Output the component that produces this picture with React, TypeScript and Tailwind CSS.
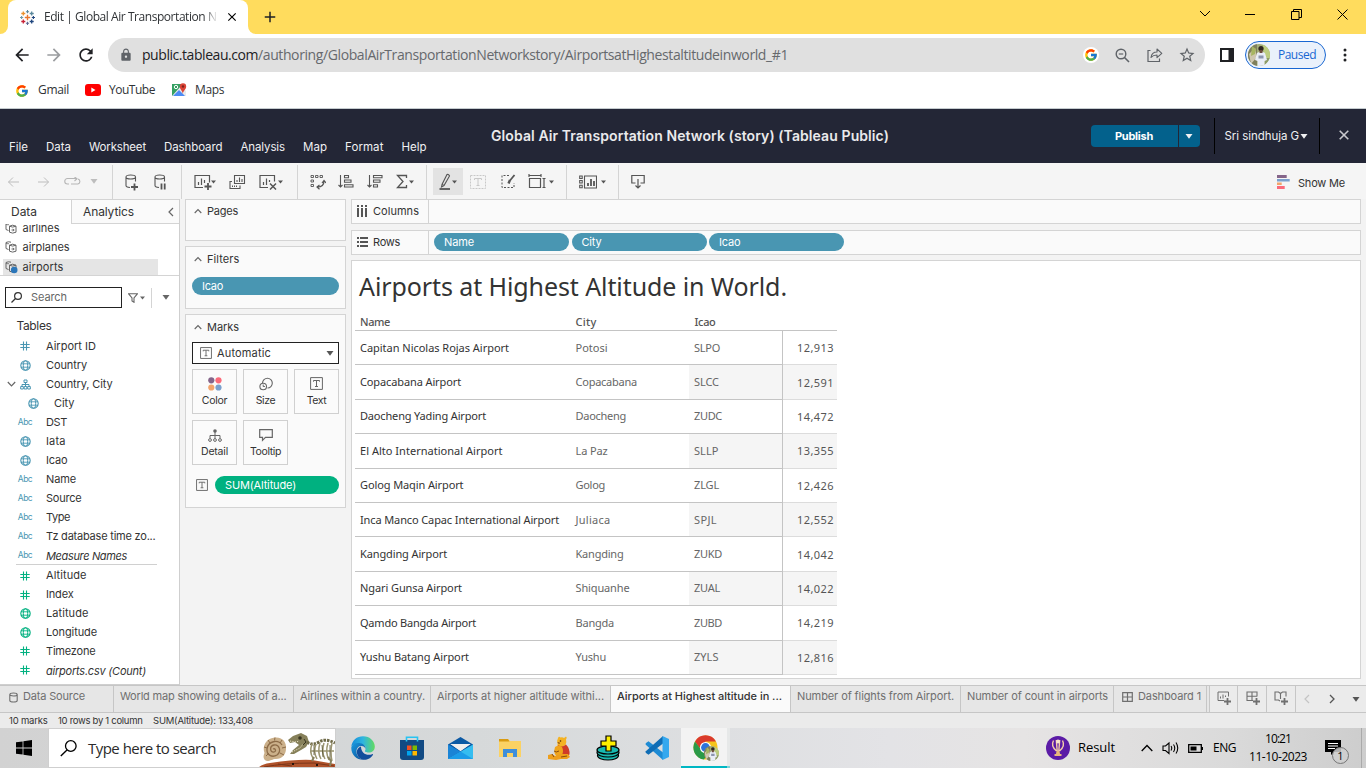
import React, { useLayoutEffect, useRef, useState } from "react";
import { MdArrowBack, MdArrowForward, MdRefresh, MdLock, MdStarBorder, MdAdd, MdClose } from "react-icons/md";
import { FcGoogle } from "react-icons/fc";

const UI = "font-['Inter','Liberation_Sans',sans-serif]";
const SYS = "font-['Open_Sans','Noto_Sans',sans-serif]";
const VIZ = "font-['Noto_Sans','Open_Sans',sans-serif]";

/* Text tracked so that it fills the given width. */
function Label({ w, c = "", children }: { w: number; c?: string; children: string }) {
  const ref = useRef<HTMLSpanElement>(null);
  const [ls, setLs] = useState(0);
  useLayoutEffect(() => {
    const el = ref.current;
    if (!el) return;
    setLs((w - el.getBoundingClientRect().width) / children.length);
  }, [w, children]);
  return (
    <span ref={ref} className={`inline-block shrink-0 justify-self-start whitespace-pre leading-4 ${c}`} style={{ letterSpacing: `${ls}px` }}>
      {children}
    </span>
  );
}

function Svg({ w, h, c = "", children }: { w: number; h: number; c?: string; children: React.ReactNode }) {
  return (
    <svg width={w} height={h} viewBox={`0 0 ${w} ${h}`} fill="none" stroke="currentColor" className={`shrink-0 ${c}`}>
      {children}
    </svg>
  );
}

const Caret = ({ c = "" }: { c?: string }) => (
  <Svg w={5} h={4} c={c}><path d="M0 .5h5L2.5 3.5z" fill="currentColor" stroke="none" /></Svg>
);
const BigCaret = ({ c = "" }: { c?: string }) => (
  <Svg w={8} h={5} c={c}><path d="M.5 0h7L4 4.8z" fill="currentColor" stroke="none" /></Svg>
);

function TableauMark() {
  const plus = (x: number, y: number, r: number, col: string, s: number) => (
    <path key={`${x}-${y}`} d={`M${x - r} ${y}h${2 * r}M${x} ${y - r}v${2 * r}`} stroke={col} strokeWidth={s} />
  );
  return (
    <Svg w={15} h={15}>
      {plus(7.5, 7.5, 2.7, "#e8762d", 1.4)}
      {plus(7.5, 1.7, 1.6, "#5b879b", 1.1)}
      {plus(7.5, 13.3, 1.6, "#5c6692", 1.1)}
      {plus(1.6, 7.5, 1.6, "#7099a6", 1.1)}
      {plus(13.4, 7.5, 1.6, "#1f457e", 1.1)}
      {plus(3.3, 3.5, 2, "#eb912c", 1.3)}
      {plus(11.7, 3.5, 2, "#59879b", 1.3)}
      {plus(3.3, 11.5, 2, "#c72035", 1.3)}
      {plus(11.7, 11.5, 2, "#1f457e", 1.3)}
    </Svg>
  );
}

function TabStrip() {
  return (
    <div className="flex h-[34px] bg-[#ffdc5d]">
      <div className="h-full w-2 bg-white"><div className="h-full w-full rounded-br-lg bg-[#ffdc5d]" /></div>
      <div className="flex h-full w-[240px] items-center rounded-t-lg bg-white pl-3">
        <TableauMark />
        <div className="ml-[9px] w-[173px] overflow-hidden text-[12px] text-[#303336] [mask-image:linear-gradient(to_right,black_160px,transparent_174px)]">
          <Label w={172.5}>Edit | Global Air Transportation N</Label>
        </div>
        <MdClose className="ml-[8px] size-[14px] shrink-0 text-black" />
      </div>
      <div className="h-full w-2 bg-white"><div className="h-full w-full rounded-bl-lg bg-[#ffdc5d]" /></div>
      <MdAdd className="ml-[5px] mt-[8px] size-[18px] text-[#202124]" />
      <div className="ml-auto flex h-[28px] items-center pr-[18px] text-black">
        <Svg w={12} h={8} c="mr-[34px]"><path d="M1 1l5 5 5-5" strokeWidth="1" /></Svg>
        <Svg w={10} h={10} c="mr-[36px]"><path d="M0 5.5h10" /></Svg>
        <Svg w={11} h={11} c="mr-[35px]"><path d="M.5 2.500h7.500v8H.5zM2.500 2.500v-2h8v8H8" /></Svg>
        <Svg w={11} h={11}><path d="M.5.5l10 10M10.5.5l-10 10" /></Svg>
      </div>
    </div>
  );
}

function Avatar({ size }: { size: number }) {
  return (
    <svg width={size} height={size} viewBox="0 0 22 22" className="shrink-0">
      <clipPath id={`av${size}`}><circle cx="11" cy="11" r="11" /></clipPath>
      <g clipPath={`url(#av${size})`}>
        <rect width="22" height="22" fill="#a3ad78" />
        <path d="M0 0h9v22H0z" fill="#7f7f5c" /><path d="M1 10l6-6 2 9-6 7z" fill="#cfc7b0" /><path d="M4 2l4 3-1 5-4 2z" fill="#a7b562" />
        <path d="M15 1h7v13h-6z" fill="#bccd80" /><path d="M17 14h5v8h-5z" fill="#8c9b66" />
        <path d="M9 9q4-3 8 0l2 7-2.500 1v5H9.500v-5L7 16z" fill="#e9edf7" />
        <circle cx="13" cy="4.500" r="2.600" fill="#2f2622" /><path d="M11.500 6h3v3h-3z" fill="#6d4c3c" /><path d="M10.500 11.500h5v3h-5z" fill="#8c96ae" />
      </g>
    </svg>
  );
}

function AddressRow() {
  return (
    <div className="flex h-[42px] items-center bg-white">
      <MdArrowBack className="ml-[12px] size-5 shrink-0 text-[#202124]" />
      <MdArrowForward className="ml-[12px] size-5 shrink-0 text-[#9b9da0]" />
      <MdRefresh className="ml-[12px] size-5 shrink-0 text-[#202124]" />
      <div className="ml-[12px] flex h-[34px] w-[1097px] items-center rounded-full bg-[#e0e0e0] pl-[11px] text-[14px]">
        <MdLock className="size-[14px] shrink-0 text-[#5f6368]" />
        <span className="ml-[9px] flex">
          <Label w={116} c="text-[#202124]">public.tableau.com</Label>
          <Label w={530} c="text-[#66696d]">/authoring/GlobalAirTransportationNetworkstory/AirportsatHighestaltitudeinworld_#1</Label>
        </span>
        <span className="ml-[295px] flex size-4 shrink-0 items-center justify-center rounded-full bg-white"><FcGoogle className="size-[14px]" /></span>
        <Svg w={15} h={15} c="ml-[16px] text-[#5f6368]">
          <circle cx="6" cy="6" r="4.8" strokeWidth="1.4" /><path d="M9.5 9.5l4.500 4.500" strokeWidth="1.6" /><path d="M3.8 6h4.400" strokeWidth="1.2" />
        </Svg>
        <Svg w={16} h={16} c="ml-[17px] text-[#5f6368]">
          <path d="M3.500 3.500H1v11h11.500v-3" strokeWidth="1.2" /><path d="M4 10.500c.5-3.500 3-5.500 6-5.500V2l4.800 4.300-4.800 4.400V8c-2.600 0-4.600.8-6 2.500z" strokeWidth="1.1" strokeLinejoin="round" />
        </Svg>
        <MdStarBorder className="ml-[15px] size-[18px] shrink-0 text-[#5f6368]" />
      </div>
      <Svg w={14} h={14} c="ml-[15px] text-[#202124]"><path d="M1 1h12v12H1z" strokeWidth="2" /><path d="M9 1h4v12H9z" fill="currentColor" /></Svg>
      <div className="ml-[11px] flex h-[28px] w-[81px] items-center rounded-full border border-[#1967d2] bg-[#eaf1fb] pl-[2px] text-[12px] text-[#1967d2]">
        <Avatar size={22} />
        <span className="ml-[8px]"><Label w={38}>Paused</Label></span>
      </div>
      <Svg w={4} h={14} c="ml-[17px] text-[#202124]"><g fill="currentColor" stroke="none"><circle cx="2" cy="2" r="1.500" /><circle cx="2" cy="7" r="1.500" /><circle cx="2" cy="12" r="1.500" /></g></Svg>
    </div>
  );
}

function Bookmarks() {
  return (
    <div className="flex h-[33px] items-center border-b border-[#c5cccf] bg-white pb-[4px] text-[12px] text-[#303336]">
      <FcGoogle className="ml-[15px] mt-px size-[14px] shrink-0" />
      <span className="ml-[9px]"><Label w={31}>Gmail</Label></span>
      <Svg w={16} h={12} c="ml-[16px]"><rect width="16" height="12" rx="3" fill="#f00" stroke="none" /><path d="M6.300 3.500v5l4.200-2.500z" fill="#fff" stroke="none" /></Svg>
      <span className="ml-[8px]"><Label w={46}>YouTube</Label></span>
      <svg width="15" height="14" viewBox="0 0 15 14" className="ml-[17px] shrink-0">
        <path d="M0 1h11v12H0z" fill="#35a163" /><path d="M0 13L9 3l5 5v5z" fill="#e8eaed" /><path d="M1 13l6-6 6 6z" fill="#4c8bf5" />
        <circle cx="4" cy="4" r="1.700" fill="none" stroke="#fff" /><path d="M10.800 11C10.500 7.500 7.800 6.500 7.800 3.500a3.200 3.200 0 016.400 0c0 3-3 4-3.400 7.500z" fill="#db4437" /><circle cx="11" cy="3.500" r="1.200" fill="#7b231c" />
      </svg>
      <span className="ml-[8px]"><Label w={29}>Maps</Label></span>
    </div>
  );
}

const MENU: [string, number][] = [["File", 19], ["Data", 25], ["Worksheet", 57], ["Dashboard", 58.5], ["Analysis", 44.5], ["Map", 24], ["Format", 38.5], ["Help", 25]];

function AppHeader() {
  return (
    <div className="grid h-[54px] grid-cols-[490px_1fr_auto] bg-[#232636] text-[11.500px] text-[#f0f0f2]">
      <div className="flex gap-[18px] pl-[9px] pt-[30px]">
        {MENU.map(([m, w]) => <Label key={m} w={w}>{m}</Label>)}
      </div>
      <div className="pl-px pt-[16px] text-[14px] font-semibold text-[#eaeaec]">
        <Label w={398}>Global Air Transportation Network (story) (Tableau Public)</Label>
      </div>
      <div className="flex h-[54px] items-center">
        <div className="flex h-[22px] w-[87px] items-center justify-center rounded-l-sm bg-[#03618c] text-[11px] font-bold text-white"><Label w={38}>Publish</Label></div>
        <div className="ml-px flex h-[22px] w-[21px] items-center justify-center rounded-r-sm bg-[#03618c]"><BigCaret /></div>
        <div className="ml-[14px] h-[36px] w-px bg-black" />
        <div className="ml-[10px] flex items-center"><Label w={74.5}>Sri sindhuja G</Label><BigCaret c="ml-[1px]" /></div>
        <div className="ml-[11px] h-[36px] w-px bg-black" />
        <Svg w={10} h={10} c="ml-[19px] mr-[17px] mb-[2px] text-[#c9c9ce]"><path d="M.7.7l8.600 8.600M9.300.7L.7 9.300" strokeWidth="1.600" /></Svg>
      </div>
    </div>
  );
}

const Sep = ({ c }: { c: string }) => <div className={`h-[34px] w-px shrink-0 bg-[#d4d4d4] ${c}`} />;
const ArrowL = <path d="M12 6H1.500M6 1.500L1.500 6 6 10.500" strokeWidth="1" />;

function Cylinder({ children }: { children: React.ReactNode }) {
  return (
    <Svg w={13} h={17} c="text-[#555]">
      <path d="M5 13.500C2.500 13.300 1 12.500 1 11.500v-8.500c0-1.200 2-2 4.700-2s4.800.8 4.800 2v4.500M1 3c0 1.200 2 2 4.700 2s4.800-.8 4.800-2" strokeWidth="1.100" />
      {children}
    </Svg>
  );
}

function ToolRow() {
  return (
    <div className="flex h-[36px] items-start bg-[#f5f5f5] pt-px text-[#555]">
      <div className="flex h-[35px] w-full items-center">
        <Svg w={13} h={12} c="ml-[7px] text-[#bdbdbd]">{ArrowL}</Svg>
        <Svg w={13} h={12} c="ml-[17px] rotate-180 text-[#bdbdbd]">{ArrowL}</Svg>
        <Svg w={18} h={10} c="ml-[14px] text-[#b5b5b5]"><path d="M5 7H3.500a2.500 2.500 0 010-5.500h9M10.500 0L13 1.700 10.500 4M14 2a2.600 2.600 0 010 5H7" strokeWidth="1.100" /></Svg>
        <BigCaret c="ml-[8px] text-[#bdbdbd]" />
        <Sep c="ml-[14px]" />
        <div className="ml-[12px] mt-px"><Cylinder><path d="M9.500 9.500v7M6 13h7" strokeWidth="1.800" /></Cylinder></div>
        <div className="ml-[16px] mt-px"><Cylinder><path d="M7.500 9.500v6M10.700 9.500v6" strokeWidth="1.800" /></Cylinder></div>
        <Sep c="ml-[14px]" />
        <Svg w={18} h={16} c="ml-[12px] mt-px"><path d="M9 13.500H1v-12h14.500v7M4.500 11V8M7.500 11V4.500M10.500 9V6" strokeWidth="1.200" /><path d="M14 9v7M10.500 12.500h7" strokeWidth="1.800" /></Svg>
        <Caret c="-ml-px" />
        <Svg w={17} h={16} c="ml-[13px]"><path d="M5.500 1.500h10v8h-10zM8 8V6M10.500 8V3.500M13 8V5M3 7.500H1v7h10v-3" strokeWidth="1.100" /><path d="M3.500 13v-1.500M5.500 13v-1.500M7.500 13v-1.500" strokeWidth="1" /></Svg>
        <Svg w={18} h={16} c="ml-[13px] mt-px"><path d="M9 13.500H1v-12h14.500v6M4.500 11V8M7.500 11V4.500M10.500 8V6" strokeWidth="1.200" /><path d="M11 9.500l6 6M17 9.500l-6 6" strokeWidth="1.500" /></Svg>
        <Caret c="ml-px" />
        <Sep c="ml-[14px]" />
        <Svg w={16} h={16} c="ml-[12px]"><path d="M1 1.500h2.500v2H1zM5.500 1.500H8v2H5.500zM10 1.500h2.500v2H10zM1 6h2.500v2H1zM1 10.500h2.500v2H1z" strokeWidth=".9" /><path d="M14 7c0 4-2 6-6.500 6M12 9l2-2.500L16 9M9.500 11l-2.500 2 2.500 2.300" strokeWidth="1.200" /></Svg>
        <Svg w={16} h={15} c="ml-[12px]"><path d="M2.500 1v12M.5 11l2 2 2-2M6.500 1.500h4v2.200h-4zM6.500 6h6.500v2.200H6.500zM6.500 10.800H15V13H6.500z" strokeWidth="1.100" /></Svg>
        <Svg w={16} h={15} c="ml-[13px]"><path d="M2.500 1v12M.5 11l2 2 2-2M6.500 1.500H15v2.200H6.500zM6.500 6h6.500v2.200H6.500zM6.500 10.800h4V13h-4z" strokeWidth="1.100" /></Svg>
        <Svg w={12} h={15} c="ml-[13px]"><path d="M10.500 4V1.500H1.500L7 7.500l-5.500 6h9V11" strokeWidth="1.300" /></Svg>
        <Caret c="ml-px" />
        <Sep c="ml-[12px]" />
        <div className="ml-[6px] flex h-[27px] w-[30px] items-center bg-[#e3e3e3] pl-[6px]">
          <Svg w={13} h={17}><path d="M3 11.500L2.500 14l2.500-1.500L10.500 3Q10 1 8 1.500zM3 11.500l2 1" strokeWidth="1.100" /><path d="M.5 16H11" strokeWidth="1.800" /></Svg>
          <Caret />
        </div>
        <Svg w={16} h={14} c="ml-[7px] text-[#c8c8c8]"><path d="M.5.500h15v13H.5z" strokeDasharray="2 1" /><path d="M4.500 5V3.500h7V5M8 3.500v7M6.500 10.500h3" /></Svg>
        <Svg w={15} h={15} c="ml-[15px]"><path d="M8 1.500H1v12h12V9" strokeDasharray="2 1.500" /><path d="M13.500 1L9 6.500" strokeWidth="1.800" /><path d="M9 6l-1.500 3.500" strokeWidth="2.400" /></Svg>
        <Svg w={18} h={15} c="ml-[12px]"><path d="M1.500 4.500h11v9h-11zM1 1.500h12M1 0v3M13 0v3M16 4.500v9M14.500 4.500h3M14.500 13.500h3" strokeWidth="1.200" /></Svg>
        <Caret c="ml-[3px]" />
        <Sep c="ml-[12px]" />
        <Svg w={18} h={14} c="ml-[12px]"><path d="M5.500 1H17.500v12H5.500zM.7 1h2.500v2.500H.7zM.7 5.500h2.500V8H.7zM.7 10.200h2.500v2.500H.7z" strokeWidth="1.100" /><path d="M9 11V8M12 11V4M15 11V6" strokeWidth="1.800" /></Svg>
        <Caret c="ml-[4px]" />
        <Sep c="ml-[12px]" />
        <Svg w={14} h={15} c="ml-[12px]"><path d="M4.500 9H.8V1.500h12.400V9H9.500M7 5v9M4.500 11.500L7 14l2.500-2.500" strokeWidth="1.200" /></Svg>
        <svg width="13" height="14" viewBox="0 0 13 14" className="ml-auto shrink-0"><path d="M0 0h9.700v3H0z" fill="#85658a" /><path d="M0 4h12.700v2.500H0z" fill="#7ba0cd" /><path d="M0 7.500h4.700V10H0z" fill="#f3a46c" /><path d="M0 11h7.700v3H0z" fill="#fb6a7a" /></svg>
        <span className="ml-[8px] mr-[21px] mt-[3px] text-[11px] text-[#333]"><Label w={47}>Show Me</Label></span>
      </div>
    </div>
  );
}

const Globe = () => (
  <Svg w={11} h={11}><circle cx="5.500" cy="5.500" r="4.700" strokeWidth="1.100" /><ellipse cx="5.500" cy="5.500" rx="2.200" ry="4.700" /><path d="M1 3.800h9M1 7.200h9" strokeWidth=".9" /></Svg>
);
const Hash = () => <Svg w={10} h={10}><path d="M3.500.5v9M6.500.5v9M.3 3.500h9.400M.3 6.500h9.400" strokeWidth="1.100" /></Svg>;
const Hier = () => <Svg w={11} h={11}><path d="M4 1h3v2.500H4zM.7 7.500h2.600V10H.7zM4.200 7.500h2.600V10H4.200zM7.700 7.500h2.600V10H7.700zM5.500 3.500v4M2 7.500v-2h7v2" strokeWidth="1" /></Svg>;
const Db = ({ dot }: { dot?: boolean }) => (
  <Svg w={13} h={13} c="text-[#666]">
    <path d="M3.500 8.500L1 7.500V1.500Q3.500.2 6 1.200M1 2Q2.500 3 3.800 2.700M4.500 4.200v6Q7.500 12 11 10.200v-6M4.500 4.200Q7.500 2.200 11 4.200 7.500 6 4.500 4.200M6.500 8h2.500M8 6.800L9.200 8 8 9.300" strokeWidth="1" />
    {dot && <circle cx="9.200" cy="9" r="3.300" fill="#2b76b9" stroke="none" />}
  </Svg>
);

type Field = { k: "h" | "g" | "a" | "t"; t: string; w: number; i?: boolean; sub?: boolean };
const DIMS: Field[] = [
  { k: "h", t: "Airport ID", w: 50 }, { k: "g", t: "Country", w: 41 }, { k: "t", t: "Country, City", w: 66.500 },
  { k: "g", t: "City", w: 20.500, sub: true }, { k: "a", t: "DST", w: 21 }, { k: "g", t: "Iata", w: 19.5 }, { k: "g", t: "Icao", w: 21.500 },
  { k: "a", t: "Name", w: 30 }, { k: "a", t: "Source", w: 35.500 }, { k: "a", t: "Type", w: 24 }, { k: "a", t: "Tz database time zo...", w: 109.500 },
  { k: "a", t: "Measure Names", w: 81, i: true },
];
const MEAS: Field[] = [
  { k: "h", t: "Altitude", w: 40.500 }, { k: "h", t: "Index", w: 27.500 }, { k: "g", t: "Latitude", w: 42.500 }, { k: "g", t: "Longitude", w: 51 },
  { k: "h", t: "Timezone", w: 49.500 }, { k: "h", t: "airports.csv (Count)", w: 100, i: true },
];

function FieldRow({ f, tone }: { f: Field; tone: string }) {
  return (
    <div className={`flex h-[18.950px] shrink-0 items-center ${f.sub ? "pl-[8px]" : ""}`}>
      <div className="flex w-[18px] shrink-0 justify-end pr-[2px] text-[#666]">{f.k === "t" && <Svg w={9} h={6}><path d="M.8 1l3.700 3.800L8.200 1" strokeWidth="1.200" /></Svg>}</div>
      <div className={`flex w-[14px] shrink-0 justify-center ${tone}`}>
        {f.k === "h" ? <Hash /> : f.k === "g" ? <Globe /> : f.k === "t" ? <Hier /> : <span className="text-[8.500px]"><Label w={14.500}>Abc</Label></span>}
      </div>
      <div className={`ml-[14px] text-[11px] text-[#333] ${f.i ? "pt-[2px] italic" : ""}`}><Label w={f.w}>{f.t}</Label></div>
    </div>
  );
}

function DataPane() {
  return (
    <div className="flex h-[486px] w-[180px] shrink-0 flex-col border-b border-r border-[#cfcfcf] bg-white text-[11px] text-[#333]">
      <div className="flex h-[25px] shrink-0 border-t border-[#d4d4d4] text-[12px]">
        <div className="w-[71px] pl-[11px] pt-[3px]"><Label w={26}>Data</Label></div>
        <div className="flex flex-1 items-center border-b border-l border-[#d4d4d4] bg-[#fafafa] pl-[11px]">
          <Label w={51}>Analytics</Label>
          <Svg w={6} h={10} c="ml-[34px] text-[#666]"><path d="M5 1L1 5l4 4" strokeWidth="1.200" /></Svg>
        </div>
      </div>
      <div className="h-[52px] shrink-0 overflow-hidden border-b border-[#d4d4d4] pl-[5px]">
        <div className="-mt-[4px] flex h-[17px] items-center"><Db /><span className="ml-[4.500px]"><Label w={37}>airlines</Label></span></div>
        <div className="flex h-[21px] items-center"><Db /><span className="ml-[4.500px]"><Label w={47}>airplanes</Label></span></div>
        <div className="-ml-[2px] mt-px flex h-[17px] w-[155px] items-center bg-[#e5e5e5] pl-[2px]"><Db dot /><span className="ml-[4.500px]"><Label w={41}>airports</Label></span></div>
      </div>
      <div className="mt-[11px] flex h-[21px] shrink-0 items-center pl-[5px] text-[#666]">
        <div className="flex h-[21px] w-[117px] items-center border border-[#222] pl-[5px]">
          <Svg w={11} h={11} c="text-[#333]"><circle cx="7" cy="4" r="3.400" strokeWidth="1.200" /><path d="M4.500 6.500L.5 10.500" strokeWidth="1.300" /></Svg>
          <span className="ml-[9px]"><Label w={36}>Search</Label></span>
        </div>
        <Svg w={10} h={10} c="ml-[6px]"><path d="M.5.700h9L6 5v4.300L4 8V5z" strokeWidth="1.100" /></Svg>
        <Caret c="ml-[2px]" />
        <div className="ml-[6px] h-[20px] w-px bg-[#d4d4d4]" />
        <BigCaret c="ml-[10px]" />
      </div>
      <div className="h-[29px] shrink-0 pl-[16.500px] pt-[9px] text-[12px]"><Label w={35}>Tables</Label></div>
      {DIMS.map((f) => <FieldRow key={f.t} f={f} tone="text-[#4996b2]" />)}
      <div className="mb-px ml-4 h-px w-[141px] shrink-0 bg-[#d0d0d0]" />
      {MEAS.map((f) => <FieldRow key={f.t} f={f} tone="text-[#00b180]" />)}
    </div>
  );
}

const TBox = ({ s = 13 }: { s?: number }) => (
  <svg width={s} height={s} viewBox="0 0 13 13" fill="none" stroke="#666" className="shrink-0"><path d="M.6.600h11.800v11.800H.6z" /><path d="M3.500 4.700V3.500h6v1.200M6.500 3.500v6M5 9.500h3" /></svg>
);

function CardTitle({ t, w }: { t: string; w: number }) {
  return (
    <div className="flex items-center"><Svg w={8} h={6} c="mr-[5px] text-[#666]"><path d="M.7 5L4 1.500 7.300 5" strokeWidth="1.100" /></Svg><Label w={w}>{t}</Label></div>
  );
}

function Shelves() {
  const btn = "flex h-[45px] w-[45px] flex-col items-center border border-[#d0d0d0] bg-[#fbfbfb]";
  return (
    <div className="ml-[5px] flex w-[161px] shrink-0 flex-col gap-[5px] text-[11px] text-[#333]">
      <div className="h-[42px] border border-[#d4d4d4] bg-[#fafafa] pl-[8px] pt-[3px]"><CardTitle t="Pages" w={31} /></div>
      <div className="h-[63px] border border-[#d4d4d4] bg-[#fafafa] pl-[6px] pt-[4px]">
        <div className="pl-[2px]"><CardTitle t="Filters" w={32.500} /></div>
        <div className="mt-[10px] flex h-[18px] w-[147px] items-center rounded-full bg-[#4996b2] pl-[10px] text-white"><Label w={21}>Icao</Label></div>
      </div>
      <div className="h-[194px] border border-[#d4d4d4] bg-[#fafafa] pl-[6px] pt-[4px]">
        <div className="pl-[2px]"><CardTitle t="Marks" w={32} /></div>
        <div className="mt-[7px] flex h-[22px] w-[147px] items-center border border-[#222] bg-white pl-[7px] pr-[4px]">
          <TBox s={12} /><span className="ml-[5px]"><Label w={54}>Automatic</Label></span><BigCaret c="ml-auto text-[#555]" />
        </div>
        <div className="mt-[5px] grid w-[147px] grid-cols-3 gap-[6px] text-[10.500px]">
          <div className={btn}>
            <svg width="14" height="14" viewBox="0 0 14 14" className="mb-[2px] mt-[7px]"><circle cx="3.300" cy="3.300" r="3.100" fill="#85658a" /><circle cx="10.500" cy="3.300" r="3.100" fill="#fb6a7a" /><circle cx="3.300" cy="10.500" r="3.100" fill="#f3a46c" /><circle cx="10.500" cy="10.500" r="3.100" fill="#7ba0cd" /></svg>
            <Label w={25.500}>Color</Label>
          </div>
          <div className={btn}>
            <Svg w={14} h={14} c="mb-[2px] mt-[7px] text-[#666]"><path d="M3.500 6a4.900 4.900 0 115 5" strokeWidth="1.100" /><circle cx="4.200" cy="9.500" r="3.300" strokeWidth="1.100" /><path d="M4.200 7.500v2h1.700" /></Svg>
            <Label w={19.500}>Size</Label>
          </div>
          <div className={btn}><div className="mb-[3px] mt-[7px] h-[13px]"><TBox /></div><Label w={19.500}>Text</Label></div>
          <div className={btn}>
            <Svg w={14} h={13} c="mb-[2px] mt-[8px] text-[#666]"><circle cx="7" cy="2" r="1.800" fill="currentColor" stroke="none" /><path d="M7 3v6.500M2 9V6.500h10V9" strokeWidth="1" /><circle cx="2" cy="11" r="1.400" /><circle cx="7" cy="11" r="1.400" /><circle cx="12" cy="11" r="1.400" /></Svg>
            <Label w={27}>Detail</Label>
          </div>
          <div className={btn}>
            <Svg w={14} h={13} c="mb-[2px] mt-[8px] text-[#666]"><path d="M.7.700h12.600v7.600H6.500l-3 3v-3H.7z" strokeWidth="1.200" /></Svg>
            <Label w={31}>Tooltip</Label>
          </div>
        </div>
        <div className="mt-[11px] flex items-center pl-[4px]">
          <TBox s={12} />
          <div className="ml-[7px] flex h-[18px] w-[124px] items-center rounded-full bg-[#00b180] pl-[10px] text-white"><Label w={71}>SUM(Altitude)</Label></div>
        </div>
      </div>
    </div>
  );
}

const ROWS: [string, number, string, number, string, number, string][] = [
  ["Capitan Nicolas Rojas Airport", 149, "Potosi", 32, "SLPO", 26, "12,913"],
  ["Copacabana Airport", 101, "Copacabana", 61.500, "SLCC", 25, "12,591"],
  ["Daocheng Yading Airport", 126, "Daocheng", 50.500, "ZUDC", 28, "14,472"],
  ["El Alto International Airport", 142.500, "La Paz", 32, "SLLP", 24.500, "13,355"],
  ["Golog Maqin Airport", 103.500, "Golog", 29.500, "ZLGL", 25, "12,426"],
  ["Inca Manco Capac International Airport", 199, "Juliaca", 35, "SPJL", 23, "12,552"],
  ["Kangding Airport", 87, "Kangding", 48, "ZUKD", 28, "14,042"],
  ["Ngari Gunsa Airport", 102, "Shiquanhe", 54, "ZUAL", 26, "14,022"],
  ["Qamdo Bangda Airport", 116, "Bangda", 38.500, "ZUBD", 28, "14,219"],
  ["Yushu Batang Airport", 109, "Yushu", 30.500, "ZYLS", 24.500, "12,816"],
];
const PILLS: [string, number][] = [["Name", 30], ["City", 20], ["Icao", 21.500]];

function Sheet() {
  return (
    <div className="ml-[5px] flex w-[1010px] shrink-0 flex-col text-[11px] text-[#333]">
      <div className="flex h-[25px] border border-[#d4d4d4] bg-[#fafafa]">
        <div className="flex w-[77px] items-center border-r border-[#d4d4d4] pb-px pl-[5px]">
          <Svg w={10} h={12} c="mr-[6px] text-[#555]"><path d="M1 0v2M5 0v2M9 0v2M1 3v9M5 3v9M9 3v9" strokeWidth="2" /></Svg><Label w={46}>Columns</Label>
        </div>
      </div>
      <div className="mt-[6px] flex h-[25px] border border-[#d4d4d4] bg-[#fafafa]">
        <div className="flex w-[77px] items-center border-r border-[#d4d4d4] pb-px pl-[5px]">
          <Svg w={11} h={10} c="mr-[5px] text-[#555]"><path d="M0 1h2M0 5h2M0 9h2M3 1h8M3 5h8M3 9h8" strokeWidth="1.800" /></Svg><Label w={27}>Rows</Label>
        </div>
        <div className="flex items-center gap-[2.500px] pb-px pl-[5px]">
          {PILLS.map(([p, w]) => <div key={p} className="flex h-[18px] w-[135px] items-center rounded-full bg-[#4996b2] pl-[10px] text-white"><Label w={w}>{p}</Label></div>)}
        </div>
      </div>
      <div className={`mt-[5px] h-[419px] border border-[#d4d4d4] bg-white pl-[3px] ${VIZ}`}>
        <div className="flex h-[52px] items-center pb-[2px] pl-[4px] text-[25px]"><Label w={428}>Airports at Highest Altitude in World.</Label></div>
        <div className="grid h-[18px] w-[482px] grid-cols-[215px_119px_1fr] border-b border-[#c4c4c4] pl-[5px] pt-px text-[11px] font-medium text-[#555]">
          <Label w={30}>Name</Label><Label w={21} c="ml-[.500px]">City</Label><Label w={21} c="ml-[.500px]">Icao</Label>
        </div>
        {ROWS.map((r, i) => (
          <div key={r[0]} className="grid h-[34.400px] w-[482px] grid-cols-[215px_119px_94px_54px] text-[11px] text-[#666]">
            <div className="flex items-center border-b border-[#c4c4c4] pl-[5px] text-[#333]"><Label w={r[1]}>{r[0]}</Label></div>
            <div className="flex items-center border-b border-[#c4c4c4] pl-[5.500px]"><Label w={r[3]}>{r[2]}</Label></div>
            <div className={`flex items-center border-b border-r border-[#c4c4c4] pl-[5px] ${i % 2 ? "bg-[#f5f5f5]" : ""}`}><Label w={r[5]}>{r[4]}</Label></div>
            <div className={`flex items-center justify-end border-b border-[#dcdcdc] pr-[3px] pt-px text-[#555] ${i % 2 ? "bg-[#f5f5f5]" : ""}`}><Label w={37}>{r[6]}</Label></div>
          </div>
        ))}
      </div>
    </div>
  );
}

const TABS: [string, number, number][] = [
  ["World map showing details of a...", 180, 166.500], ["Airlines within a country.", 137, 125], ["Airports at higher altitude withi...", 180, 167],
  ["Airports at Highest altitude in ...", 180, 165], ["Number of flights from Airport.", 170, 157], ["Number of count in airports", 153, 141],
];
const plus = <path d="M10.500 7v7M7 10.500h7" strokeWidth="1.800" />;

function SheetTabs() {
  const cell = "flex h-full shrink-0 items-start border-r border-[#c6c6c6]";
  return (
    <div className="flex h-[28px] border-b border-t border-[#c6c6c6] bg-[#e6e6e6] text-[11px] text-[#6f6f6f]">
      <div className={`${cell} w-[114px] pl-[9px] pt-[2px]`}>
        <Svg w={9} h={11} c="mt-[4px]"><path d="M.8 2.500v6c0 .8 1.500 1.500 3.700 1.500s3.700-.7 3.700-1.500v-6M.8 2.500C.8 1.500 2.300 1 4.500 1s3.700.5 3.700 1.500S6.700 4 4.500 4 .8 3.300.8 2.500" strokeWidth="1.100" /></Svg>
        <span className="ml-[5px]"><Label w={62}>Data Source</Label></span>
      </div>
      {TABS.map(([t, w, lw], i) => (
        <div key={t} style={{ width: w }} className={`${cell} pl-[6px] pt-[2px] ${i === 3 ? "bg-[#fafafa] font-medium text-[#333]" : ""}`}><Label w={lw}>{t}</Label></div>
      ))}
      <div className={`${cell} w-[92.500px] pl-[8px] pt-[2px]`}>
        <Svg w={11} h={10} c="mt-[4px]"><path d="M.7.700h9.600v8.600H.7zM5.500.700v8.600M.7 5h9.600" strokeWidth="1.200" /></Svg>
        <span className="ml-[5px]"><Label w={63}>Dashboard 1</Label></span>
      </div>
      <div className="ml-[2px] flex flex-1 border-l border-[#c6c6c6] bg-[#ebebeb]">
        <div className={`${cell} w-[28px] pl-[7px] pt-[5px]`}><Svg w={14} h={14}><path d="M7 9.500H1V1h10.500v4.500M3.500 7.500v-2M6 7.500V3.500M8.500 6V4.500" />{plus}</Svg></div>
        <div className={`${cell} w-[29px] pl-[8px] pt-[5px]`}><Svg w={14} h={14}><path d="M7 9.500H1V1h10v4.500M6 1v8.500M1 5.200h10" strokeWidth="1.100" />{plus}</Svg></div>
        <div className={`${cell} w-[29px] pl-[7px] pt-[5px]`}><Svg w={15} h={14}><path d="M6 10L4.500 9H1V1h3.500L6.500 2.500 8.500 1H12v4.500M6.500 2.500V8" strokeWidth="1.100" />{plus}</Svg></div>
        <div className="flex items-center pl-[8px]">
          <Svg w={6} h={10} c="text-[#c4c4c4]"><path d="M5 1L1 5l4 4" strokeWidth="1.200" /></Svg>
          <Svg w={6} h={10} c="ml-[19px] text-[#555]"><path d="M1 1l4 4-4 4" strokeWidth="1.300" /></Svg>
          <BigCaret c="ml-[17px] text-[#555]" />
        </div>
      </div>
    </div>
  );
}

const Slot = ({ c = "", children }: { c?: string; children: React.ReactNode }) => <div className={`flex h-10 w-[49px] shrink-0 items-center justify-center ${c}`}>{children}</div>;

function Fossil() {
  return (
    <svg width="77" height="35" viewBox="0 0 77 35" className="shrink-0">
      <path d="M0 35q4-4 12-5 28-4 42-3l23 4v4z" fill="#b0532b" /><path d="M6 34q20-4 50-4l20 3M20 31l14 2" stroke="#7d3619" fill="none" />
      <path d="M16.500 4.500c8-1 12 4.500 11.500 11 0 6-4 10.500-10 10.500-4 0-5 2-9 2-4-1-4-5-2.500-8C4 13 8 5.500 16.500 4.500z" fill="#cbb08a" />
      <path d="M24 12c-4-6-14-4-15 4-.5 6 5 9 10 6 5-4 2-11-3-10-5 1-4 8 0 7 3-1 1-4-1-3" fill="none" stroke="#8d6c48" strokeWidth="1.300" />
      <path d="M17 4.500l-.500 3M24 7l-2 3M28 14l-4 1M26 22l-4-2M10 7l2 3M6 14l3 1M8 23l3-3" stroke="#8d6c48" />
      <path d="M30 7l5-4 8-3 6 3 2 6-3 5-5 3-7 4h-4l3-4 6-5-4-3-5 1z" fill="#86805a" /><path d="M32 8l6 1 3-1M34 19l8-4 3-4" stroke="#e9e2c2" strokeDasharray="1.200 1.200" fill="none" />
      <circle cx="42" cy="5" r="1.800" fill="#37331f" /><path d="M46 6l2 3-3 3" stroke="#37331f" fill="none" />
      <path d="M49 9q6 4 12 0t16 1" stroke="#6f6a48" strokeWidth="3" fill="none" strokeDasharray="2.500 1" />
      <path d="M54 11q-3 8 1 14M58 11q-3 8 1 15M62 10q-3 9 1 16M66 10q-3 9 1 16M70 10q-3 9 1 17M74 10q-2 9 0 18M53 18h23" stroke="#9b9570" strokeWidth="1.500" fill="none" />
      <path d="M56 12v10M64 12l1 12M72 12v14" stroke="#55502f" strokeWidth=".8" /><path d="M70 24l3 4-1 5M56 24l-2 4" stroke="#86805a" strokeWidth="2" fill="none" />
      <path d="M34 31h2M58 32h2" stroke="#28140b" strokeWidth="2" />
    </svg>
  );
}

function Taskbar() {
  return (
    <div className={`flex h-10 items-center bg-[linear-gradient(to_right,#d2d2d2,#d6d9da_35%,#e3e3e6_65%,#e6e4e4_75%,#dadada_90%,#cdcdcd)] text-black ${SYS}`}>
      <div className="flex w-[48px] shrink-0 justify-center"><svg width="16" height="16" viewBox="0 0 16 16"><path d="M0 2.300L6.600 1.400v6.200H0zM7.400 1.300L16 0v7.600H7.400zM0 8.400h6.600v6.200L0 13.700zM7.400 8.400H16V16l-8.600-1.300z" /></svg></div>
      <div className="flex h-[40px] w-[288px] shrink-0 items-center overflow-hidden border border-[#cfcfcf] bg-white pl-[11px] text-[15px] text-[#2b2b2b]">
        <Svg w={17} h={17} c="text-black"><circle cx="10.800" cy="6" r="5.300" strokeWidth="1.300" /><path d="M7 10L.8 16" strokeWidth="1.400" /></Svg>
        <span className="ml-[11px]"><Label w={128}>Type here to search</Label></span>
        <div className="ml-auto mt-[4px] h-[35px]"><Fossil /></div>
      </div>
      <Slot c="ml-[2px]">
        <svg width="24" height="24" viewBox="0 0 24 24">
          <defs>
            <linearGradient id="edTop" x1="0" x2="1"><stop stopColor="#168bd8" /><stop offset=".5" stopColor="#2fb5e0" /><stop offset="1" stopColor="#62db60" /></linearGradient>
            <linearGradient id="edLow" x1="0" x2="1" y1="0" y2="1"><stop stopColor="#1a9be0" /><stop offset="1" stopColor="#0b4a94" /></linearGradient>
          </defs>
          <path d="M.3 11C1 4 6 .2 12 .2c7 0 11.800 5 11.800 10.300 0 4-2.800 6-6 6-2.800 0-4.600-1-3.600-2.300 1.500-2-.2-5.700-4.200-5.900C5 8 1 8.500.3 11z" fill="url(#edTop)" />
          <path d="M.3 11.500C1 8.500 4 6.500 8 7c4 .3 7 3 6.500 6-.5-2-2-3-4-3-3 0-5 2-5 5.500C5.500 20 9 23.500 13 23.800 6 24.300 0 19 .3 11.500z" fill="url(#edLow)" />
          <path d="M10 10.500c-3.500 1.500-4.500 4-4 7 .8 4 4 6.300 7.500 6.300 3 0 7-2 8.500-5 .3-.6-.2-.9-.8-.6-5.200 2-11.200-.7-11.200-7.700z" fill="#124e9c" />
        </svg>
      </Slot>
      <Slot><svg width="24" height="24" viewBox="0 0 24 24"><path d="M0 4h24v17q0 3-3 3H3q-3 0-3-3z" fill="#124a83" /><path d="M6.500 5.500V1.300h11v4.200" fill="none" stroke="#28c3f2" strokeWidth="1.600" /><path d="M7 9.500h4.500V14H7z" fill="#f25022" /><path d="M12.500 9.500H17V14h-4.500z" fill="#7fba00" /><path d="M7 15h4.500v4.500H7z" fill="#00a4ef" /><path d="M12.500 15H17v4.500h-4.500z" fill="#ffb900" /></svg></Slot>
      <Slot><svg width="25" height="24" viewBox="0 0 25 24"><path d="M0 8.500L12.500 1 25 8.500V23H0z" fill="#0c59a4" /><path d="M2.500 8h20L12.500 15z" fill="#f0eeee" /><path d="M0 8.500L12.500 15.500 0 23z" fill="#1a84d6" /><path d="M25 8.500V23H0z" fill="#35bdf0" /><path d="M2.500 8h20l-10 7z" fill="#f0eeee" /><path d="M0 23l12.500-7.500L25 23z" fill="#1c9ce8" /></svg></Slot>
      <Slot><svg width="22" height="20" viewBox="0 0 22 20"><path d="M0 1h9l2 2h11v16H0z" fill="#fbd264" /><path d="M0 1h9l1.500 2.500H0z" fill="#d99b12" /><path d="M4 19v-8h14v8h-4v-4H8v4z" fill="#3e8edb" /></svg></Slot>
      <Slot>
        <svg width="24" height="26" viewBox="0 0 24 26">
          <path d="M11 3q1-2 2.500-.5 2-.8 3.500.5l2-1.500q1.500 1 0 3 1 3-.5 5.500L14 13q-4-.5-3.500-4.500-1-2.500.500-5.500z" fill="#f4b223" />
          <path d="M11 10q4 3 8-.5 4 4 3.500 10L18 22l-6-1-2-7z" fill="#cf3b28" /><path d="M8 12q4-3 7 0 2 4 0 8l-5 2q-4-4-2-10z" fill="#f0a51d" />
          <path d="M1 20l4-1 3 2 6-2h7l2 3-3 2h-6l-5 1-4-.500L1 24z" fill="#ee9f1c" /><path d="M5 19l2 3M12 16q-3 2-5 0M14 22l6-1M13 8q-2 1-2-1" stroke="#7c420f" strokeWidth=".9" fill="none" /><circle cx="13.500" cy="6" r=".8" fill="#4a2508" />
        </svg>
      </Slot>
      <Slot><svg width="24" height="26" viewBox="0 0 24 26"><g fill="#19b8b0" stroke="#000" strokeWidth="1.200"><ellipse cx="12" cy="20.500" rx="10.500" ry="4.500" /><ellipse cx="12" cy="17.500" rx="11" ry="4.500" /><ellipse cx="12" cy="15" rx="11" ry="4" /></g><path d="M10 1h5v5h5v5h-5v5h-5v-5H5V6h5z" fill="#fff000" stroke="#000" strokeWidth="1.200" /></svg></Slot>
      <Slot><svg width="24" height="24" viewBox="0 0 24 24"><path d="M1 7l2.500-1.800L18 16.500V24L.8 8.800Q.2 7.800 1 7z" fill="#1e8bd4" /><path d="M1 17l2.500 1.800L18 7.500V0L.8 15.200Q.2 16.200 1 17z" fill="#0f6db5" /><path d="M17.500 0L24 3v18l-6.500 3z" fill="#35a8ee" /></svg></Slot>
      <div className="flex h-10 w-[46px] shrink-0 items-center justify-center border-b-2 border-[#00b7c3] bg-[#f3f3f3]">
        <div className="relative ml-[3px] size-[25px]">
          <svg width="25" height="25" viewBox="0 0 25 25"><circle cx="12.500" cy="12.500" r="12" fill="#f6c51c" /><path d="M2 6.500A12 12 0 0123 6.500H12.500L8 15z" fill="#da3a2c" /><path d="M2 6.500A12 12 0 0011 24.500L17 15l-9-.5z" fill="#2b9a48" /><circle cx="12.500" cy="12.500" r="5.600" fill="#fff" /><circle cx="12.500" cy="12.500" r="4.400" fill="#2d74da" /></svg>
          <div className="absolute left-[11px] top-[11px]"><Avatar size={15} /></div>
        </div>
      </div>
      <div className="h-10 w-[3px] shrink-0 border-b-2 border-[#7bd3d8] bg-[#e6e8e8]" />
      <div className="ml-auto flex items-center">
        <svg width="24" height="24" viewBox="0 0 24 24"><circle cx="12" cy="12" r="12" fill="#5b1ba6" /><path d="M7.500 4.500q-3 5.500 3 10.500M16.500 4.500q3 5.500-3 10.500M10.300 4l.9 11M13.700 4l-.9 11" fill="none" stroke="#f3cfa8" strokeWidth="1.400" /><circle cx="12" cy="5.500" r="2" fill="#f7e3cf" /><path d="M10.500 15h3l.5 3h1.500v2h-7v-2H10z" fill="#e9b87c" /></svg>
        <span className="ml-[8px] text-[13px]"><Label w={37}>Result</Label></span>
        <Svg w={12} h={8} c="ml-[26px]"><path d="M.7 7L6 1.500 11.300 7" strokeWidth="1.300" /></Svg>
        <Svg w={17} h={14} c="ml-[9px]"><path d="M1 5h2.500L7 2v10.500L3.500 9.500H1zM9 5q1.500 2 0 4.500M11.500 3.500q2.500 3.500 0 7.500M14 1.500q3.500 5.500 0 11" strokeWidth="1.100" /></Svg>
        <Svg w={15} h={9} c="ml-[9px]"><path d="M.7.700h12.600v7.600H.7zM14.500 3v3" strokeWidth="1.300" /><path d="M2.500 2.500h6v4h-6z" fill="currentColor" stroke="none" /></Svg>
        <span className="ml-[10px] text-[12px]"><Label w={23}>ENG</Label></span>
        <div className="ml-[13px] flex flex-col items-center gap-[2px] text-[12px]"><Label w={26}>10:21</Label><Label w={58}>11-10-2023</Label></div>
        <div className="relative ml-[18px] mt-[5px] h-[26px] w-[24px]">
          <svg width="16" height="16" viewBox="0 0 16 16" className="mt-[2px]"><path d="M0 0h16v12H9l-3 3v-3H0z" /><path d="M3 3.500h10M3 6h10M3 8.500h7" stroke="#fff" strokeWidth="1" /></svg>
          <span className="absolute left-[7px] top-[9px] flex size-[17px] items-center justify-center rounded-full border border-[#777] bg-[#cfcfcf]/85 text-[11px] leading-none">1</span>
        </div>
        <div className="ml-[12px] h-10 w-px bg-[#aaa]" /><div className="w-[4px]" />
      </div>
    </div>
  );
}

export default function App() {
  return (
    <div className={`flex h-[768px] w-[1366px] flex-col overflow-hidden bg-[#f3f3f3] ${UI}`}>
      <div className={SYS}><TabStrip /><AddressRow /><Bookmarks /></div>
      <AppHeader />
      <ToolRow />
      <div className="flex h-[486px] shrink-0"><DataPane /><Shelves /><Sheet /></div>
      <SheetTabs />
      <div className="flex h-[15px] shrink-0 items-center gap-[10.500px] bg-[#ebebeb] pl-[9px] text-[9.500px] text-[#333]">
        <Label w={38.500}>10 marks</Label><Label w={84.500}>10 rows by 1 column</Label><Label w={100}>SUM(Altitude): 133,408</Label>
      </div>
      <Taskbar />
    </div>
  );
}
